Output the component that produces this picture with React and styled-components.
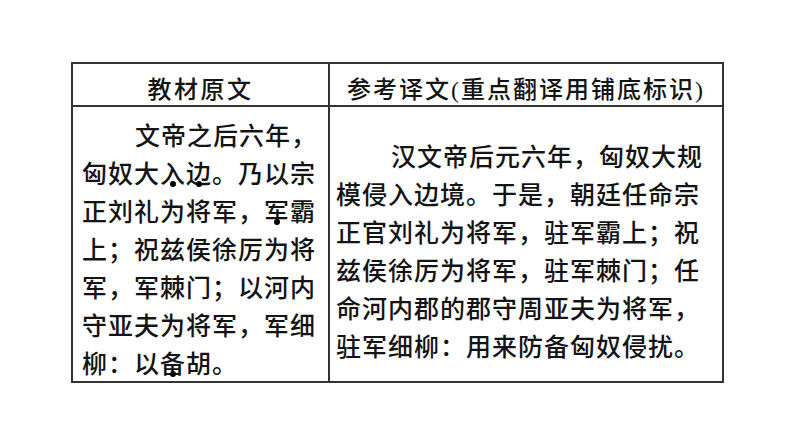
import React from "react";
import styled, { createGlobalStyle } from "styled-components";

const Global = createGlobalStyle`
  html, body { margin: 0; padding: 0; background: #ffffff; }
  body { font-family: "Liberation Serif", "Noto Sans CJK SC", serif; color: #141414; }
`;

const Page = styled.div`
  padding: 62px 0 0 71px;
`;

const Table = styled.div`
  display: grid;
  grid-template-columns: 257px 392px;
  border: 2px solid #333333;
  width: fit-content;
`;

const HeaderCell = styled.div`
  height: 43px;
  padding-top: 6px;
  box-sizing: border-box;
  display: flex;
  align-items: center;
  justify-content: center;
  border-bottom: 2px solid #333333;
  border-right: ${(p) => (p.$divider ? "2px solid #333333" : "none")};
  font-family: "Liberation Serif", "Noto Sans CJK SC", serif;
  font-weight: 500;
  font-size: 24px;
  letter-spacing: ${(p) => p.$spacing}px;
  white-space: nowrap;
  color: #141414;
`;

const BodyCell = styled.div`
  padding: ${(p) => p.$top}px 0 0 ${(p) => p.$left}px;
  border-right: ${(p) => (p.$divider ? "2px solid #333333" : "none")};
  font-family: "Noto Sans CJK SC", sans-serif;
  font-weight: 500;
  font-size: 25px;
  letter-spacing: 1px;
`;

const Line = styled.div`
  position: relative;
  height: 38px;
  line-height: 38px;
  white-space: nowrap;
  padding-left: ${(p) => p.$indent || 0}px;
`;

const Stressed = styled.span`
  position: relative;
  display: inline-block;
`;

const DotMark = styled.i`
  position: absolute;
  display: block;
  box-sizing: border-box;
  left: 10px;
  top: 28px;
  width: 6px;
  height: 6px;
  border: 3px solid #000000;
  border-radius: 50%;
  background-color: #000000;
  z-index: 5;
`;

function Dot({ children }) {
  return (
    <Stressed>
      {children}
      <DotMark />
    </Stressed>
  );
}

export default function App() {
  return (
    <>
      <Global />
      <Page>
        <Table>
          <HeaderCell $divider $spacing={2.5}>教材原文</HeaderCell>
          <HeaderCell $spacing={2}>参考译文(重点翻译用铺底标识)</HeaderCell>
          <BodyCell $divider $top={8} $left={9}>
            <Line $indent={53}>文帝之后六年，</Line>
            <Line>
              匈奴大<Dot>入</Dot><Dot>边</Dot>。乃以宗
            </Line>
            <Line>
              正刘礼为将军，<Dot>军</Dot>霸
            </Line>
            <Line>上；祝兹侯徐厉为将</Line>
            <Line>军，军棘门；以河内</Line>
            <Line>守亚夫为将军，军细</Line>
            <Line>
              柳：以<Dot>备</Dot>胡。
            </Line>
          </BodyCell>
          <BodyCell $top={29} $left={6}>
            <Line $indent={55}>汉文帝后元六年，匈奴大规</Line>
            <Line>模侵入边境。于是，朝廷任命宗</Line>
            <Line>正官刘礼为将军，驻军霸上；祝</Line>
            <Line>兹侯徐厉为将军，驻军棘门；任</Line>
            <Line>命河内郡的郡守周亚夫为将军，</Line>
            <Line>驻军细柳：用来防备匈奴侵扰。</Line>
          </BodyCell>
        </Table>
      </Page>
    </>
  );
}
